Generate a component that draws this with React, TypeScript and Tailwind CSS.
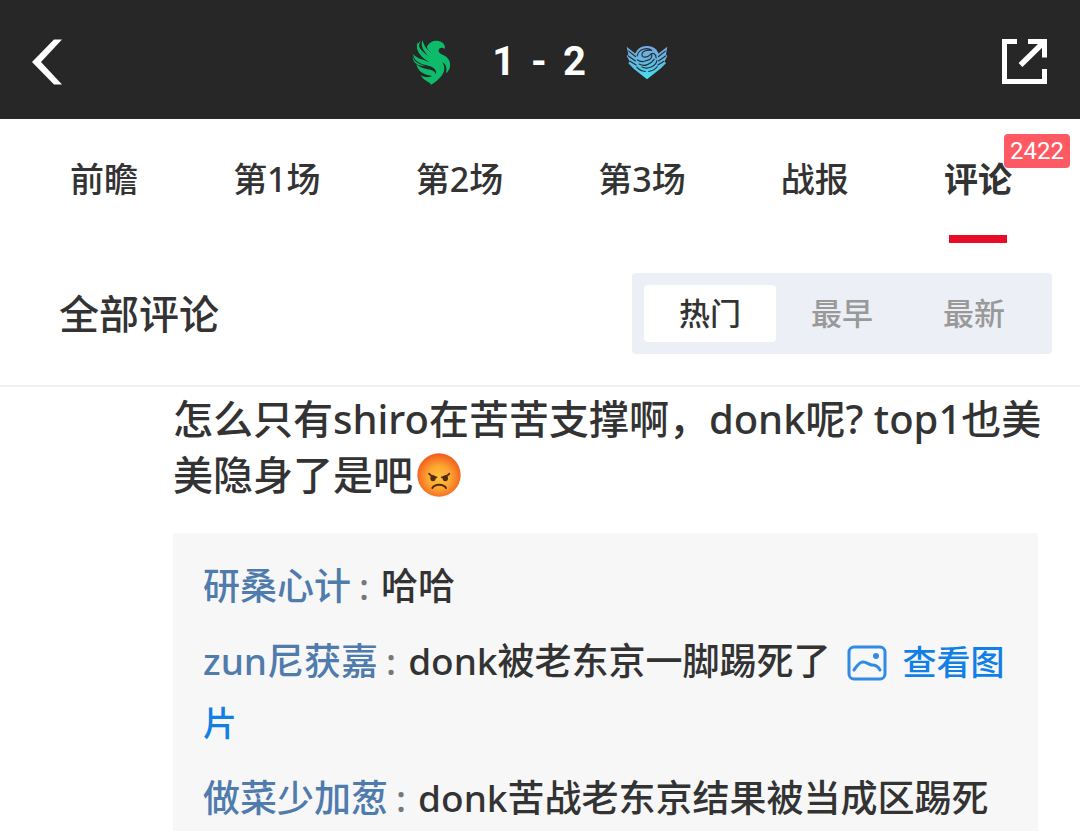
import { useState } from "react";
import type { ReactNode } from "react";

const tabs = ["前瞻", "第1场", "第2场", "第3场", "战报", "评论"];
const sorts = ["热门", "最早", "最新"];

function BackIcon() {
  return (
    <svg width="30" height="46" viewBox="0 0 30 46" fill="#fff" aria-hidden="true">
      <path d="M22 0.500H30L9 23L30 45.500H22L0 23Z" />
    </svg>
  );
}

function ShareIcon() {
  return (
    <svg width="46" height="46" viewBox="0 0 46 46" fill="none" stroke="#fff" strokeWidth="5" aria-hidden="true">
      <path d="M15 2.500H2.500V42.500H42.500V30" />
      <path d="M26 2.500H42.500V18.500" />
      <path d="M42 3L18.500 26" strokeWidth="5.500" />
    </svg>
  );
}

function FalconLogo() {
  return (
    <svg width="40" height="46" viewBox="40 36 118 138" fill="#0dbb6b" aria-hidden="true">
      <path d="M84 58C92 44 105 39 119 42C133 45 140 55 137 66C130 60 121 62 119 69C118 77 125 81 134 85C149 92 155 105 153 119C151 129 146 135 141 139C145 122 140 111 130 106C139 119 137 134 128 146C120 157 108 165 97 173C88 163 72 159 65 145C79 153 92 151 99 147C83 144 58 139 52 112C65 124 83 126 96 129C105 132 109 136 111 142C114 129 104 121 91 117C70 112 45 106 42 81C55 96 75 98 91 106C70 91 50 79 54 45C60 66 75 77 88 88C76 73 62 57 71 39C74 58 87 70 98 80C89 71 83 65 84 58Z" />
      <path d="M66 42C58 52 59 63 67 75C72 83 80 89 87 95C70 87 57 77 54 62C53 53 58 46 66 42Z" />
      <path d="M42 89C45 105 60 111 79 116C64 118 49 112 44 102C42 97 41 92 42 89Z" />
    </svg>
  );
}

function SpiritLogo() {
  return (
    <svg width="42" height="36" viewBox="40 50 124 106" aria-hidden="true">
      <defs>
        <linearGradient id="spirit" x1="0" y1="0" x2="0" y2="1">
          <stop offset="0" stopColor="#7aa9dd" />
          <stop offset="0.500" stopColor="#61b9e2" />
          <stop offset="1" stopColor="#45e2f0" />
        </linearGradient>
      </defs>
      <path
        d="M42 58L67 78L73 68C83 53 117 50 130 67L136 78L162 58L158 81L162 85L154 101L158 107L144 121L102 154L62 122L47 107L51 101L42 85L47 81Z"
        fill="url(#spirit)"
      />
      <g fill="none" stroke="#24303a" strokeWidth="3.500" strokeLinecap="round">
        <path d="M48 71L68 87M47 85L68 100M52 101L70 112M156 71L136 87M157 85L136 100M152 101L134 112" />
        <path d="M73 85C77 65 102 58 117 69C102 66 88 70 87 81C87 92 103 91 112 81C119 73 129 79 129 91" />
        <path d="M74 97C84 105 94 102 103 98C114 95 117 88 116 81M79 109C94 119 114 108 123 95M87 118C105 126 128 116 131 99" />
        <path d="M72 118C79 127 88 130 97 131M107 131C118 129 126 125 132 117" />
      </g>
    </svg>
  );
}

function AngryFace() {
  return (
    <svg className="ml-1 inline-block align-[-7px]" width="44" height="44" viewBox="0 0 132 132" role="img" aria-label="生气">
      <defs>
        <radialGradient id="face" cx="0.500" cy="0.550" r="0.520">
          <stop offset="0" stopColor="#ffc33f" />
          <stop offset="0.500" stopColor="#fda632" />
          <stop offset="1" stopColor="#f4611e" />
        </radialGradient>
      </defs>
      <circle cx="66" cy="66" r="65" fill="url(#face)" />
      <g fill="#512b12">
        <ellipse cx="48" cy="76" rx="8" ry="9" />
        <ellipse cx="85" cy="76" rx="8" ry="9" />
      </g>
      <g fill="none" stroke="#512b12" strokeWidth="5" strokeLinecap="round">
        <path d="M36 62C42 69 50 73 59 73M97 62C91 69 83 73 74 73" />
        <path d="M46 105C54 92 79 92 87 105" strokeWidth="6" />
      </g>
    </svg>
  );
}

function PictureIcon() {
  return (
    <svg className="mx-4 inline-block align-[-6px]" width="40" height="36" viewBox="0 0 40 36" fill="none" stroke="#2f8be6" strokeWidth="3" strokeLinecap="round" aria-hidden="true">
      <rect x="2" y="2" width="36" height="32" rx="5" />
      <path d="M7 25C10 21 12 17 16 17C20 17 22 20 25 20C29 20 31 21 33 25" />
      <circle cx="29" cy="11" r="3" fill="#2f8be6" stroke="none" />
    </svg>
  );
}

function Reply({ name, children }: { name: string; children: ReactNode }) {
  return (
    <li>
      <a href="#user" className="text-[#4f7bad]">{name}</a>
      <span className="mr-3 ml-2 text-[#777]">:</span>
      {children}
    </li>
  );
}

export default function App() {
  const [tab, setTab] = useState("评论");
  const [sort, setSort] = useState("热门");

  return (
    <div className="flex min-h-screen flex-col bg-white font-['Noto_Sans','Noto_Sans_CJK_SC',sans-serif] font-medium text-[#333]">
      {/* Match score */}
      <header className="grid h-[119px] grid-cols-[1fr_auto_1fr] items-center bg-[#272727] px-8 pt-1 text-white">
        <button type="button" aria-label="返回" className="justify-self-start">
          <BackIcon />
        </button>
        <div className="flex items-center gap-10">
          <FalconLogo />
          <div className="flex gap-4 font-['Roboto',sans-serif] text-[40px] leading-12 font-bold">
            <span>1</span>
            <span>-</span>
            <span>2</span>
          </div>
          <SpiritLogo />
        </div>
        <button type="button" aria-label="分享" className="justify-self-end">
          <ShareIcon />
        </button>
      </header>

      {/* Tabs */}
      <nav className="flex h-[124px] justify-between pr-[68px] pl-[70px] text-[34px] leading-[120px]">
        {tabs.map((t) => (
          <button
            key={t}
            type="button"
            onClick={() => setTab(t)}
            className={t === tab ? "relative flex flex-col items-center font-bold" : "relative flex flex-col items-center"}
          >
            <span className="h-[116px]">{t}</span>
            {t === tab && <span className="h-2 w-[58px] bg-[#e90c27]" />}
            {t === "评论" && (
              <span className="absolute top-[15px] left-[60px] rounded-sm bg-[#ff5a63] px-[6px] font-['Roboto',sans-serif] text-[24px] leading-[34px] font-normal text-white">
                2422
              </span>
            )}
          </button>
        ))}
      </nav>

      {/* Sort bar */}
      <section className="flex items-center justify-between border-b-2 border-[#f0f0f0] pt-[30px] pr-7 pb-[31px] pl-[59px]">
        <h1 className="text-[40px] leading-[58px]">全部评论</h1>
        <div className="flex rounded-sm bg-[#eceff5] p-3 text-[31px] leading-[57px]">
          {sorts.map((s) => (
            <button
              key={s}
              type="button"
              onClick={() => setSort(s)}
              className={s === sort ? "w-[132px] rounded-sm bg-white" : "w-[132px] text-[#999]"}
            >
              {s}
            </button>
          ))}
        </div>
      </section>

      {/* Comment thread */}
      <main className="flex flex-1 flex-col pt-1 pr-8 pl-[173px]">
        <p className="text-[40px] leading-[56px]">
          怎么只有shiro在苦苦支撑啊，donk呢? top1也美美隐身了是吧
          <AngryFace />
        </p>
        <ul className="mt-[30px] mr-[10px] flex flex-1 flex-col gap-[15px] bg-[#f7f7f7] px-[30px] pt-[23px] text-[37px] leading-[60px]">
          <Reply name="研桑心计">哈哈</Reply>
          <Reply name="zun尼获嘉">
            donk被老东京一脚踢死了
            <PictureIcon />
            <a href="#picture" className="text-[34px] text-[#117fe6]">查看图片</a>
          </Reply>
          <Reply name="做菜少加葱">donk苦战老东京结果被当成区踢死</Reply>
        </ul>
      </main>
    </div>
  );
}
